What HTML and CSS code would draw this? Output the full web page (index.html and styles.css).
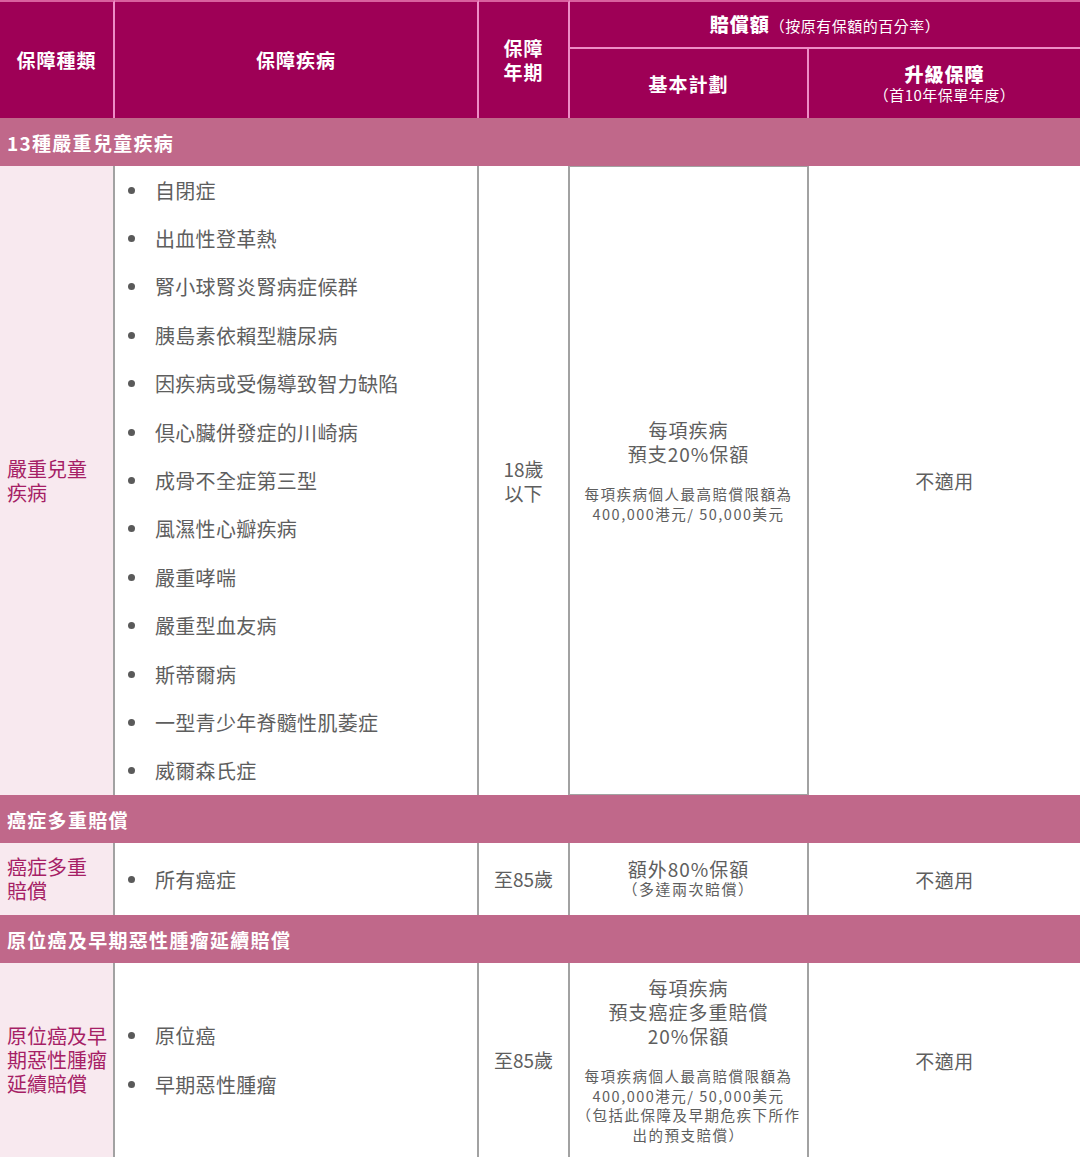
FILE: index.html
```html
<!DOCTYPE html>
<html lang="zh-Hant">
<head>
<meta charset="utf-8">
<title>保障表</title>
<link rel="stylesheet" href="styles.css">
</head>
<body>
<div class="table">
  <div class="h h-type">保障種類</div>
  <div class="h h-disease">保障疾病</div>
  <div class="h h-term">保障<br>年期</div>
  <div class="h h-amount"><span class="amount-line"><b>賠償額</b><span class="note">（按原有保額的百分率）</span></span></div>
  <div class="h h-basic">基本計劃</div>
  <div class="h h-upgrade"><b>升級保障</b><span class="note">（首10年保單年度）</span></div>

  <div class="section">13種嚴重兒童疾病</div>
  <div class="c type">嚴重兒童<br>疾病</div>
  <ul class="c list list-fill">
    <li>自閉症</li>
    <li>出血性登革熱</li>
    <li>腎小球腎炎腎病症候群</li>
    <li>胰島素依賴型糖尿病</li>
    <li>因疾病或受傷導致智力缺陷</li>
    <li>倶心臟併發症的川崎病</li>
    <li>成骨不全症第三型</li>
    <li>風濕性心瓣疾病</li>
    <li>嚴重哮喘</li>
    <li>嚴重型血友病</li>
    <li>斯蒂爾病</li>
    <li>一型青少年脊髓性肌萎症</li>
    <li>威爾森氏症</li>
  </ul>
  <div class="c term">18歲<br>以下</div>
  <div class="c basic boxed raised">
    <div class="main">每項疾病<br>預支20%保額</div>
    <div class="small">每項疾病個人最高賠償限額為<br>400,000港元/ 50,000美元</div>
  </div>
  <div class="c upgrade">不適用</div>

  <div class="section">癌症多重賠償</div>
  <div class="c type">癌症多重<br>賠償</div>
  <ul class="c list">
    <li>所有癌症</li>
  </ul>
  <div class="c term">至85歲</div>
  <div class="c basic">
    <div class="main tight">額外80%保額</div>
    <div class="small tight">（多達兩次賠償）</div>
  </div>
  <div class="c upgrade">不適用</div>

  <div class="section">原位癌及早期惡性腫瘤延續賠償</div>
  <div class="c type">原位癌及早<br>期惡性腫瘤<br>延續賠償</div>
  <ul class="c list">
    <li>原位癌</li>
    <li>早期惡性腫瘤</li>
  </ul>
  <div class="c term">至85歲</div>
  <div class="c basic">
    <div class="main">每項疾病<br>預支癌症多重賠償<br>20%保額</div>
    <div class="small">每項疾病個人最高賠償限額為<br>400,000港元/ 50,000美元<br>（包括此保障及早期危疾下所作<br>出的預支賠償）</div>
  </div>
  <div class="c upgrade">不適用</div>
</div>
</body>
</html>
```

FILE: styles.css
```css
* {
  box-sizing: border-box;
}

html, body {
  margin: 0;
  padding: 0;
  background: #ffffff;
}

body {
  font-family: "Noto Sans CJK TC", "Noto Sans CJK SC", sans-serif;
  color: #5e5e5e;
}

.table {
  width: 1080px;
  display: grid;
  grid-template-columns: 115px 364px 91px 239px 271px;
  grid-template-rows: 49px 69px 48px 629px 48px 72px 48px 194px;
}

/* header */
.h {
  background: #9e0056;
  color: #ffffff;
  font-weight: 700;
  font-size: 19px;
  letter-spacing: 1px;
  line-height: 24px;
  display: flex;
  flex-direction: column;
  align-items: center;
  justify-content: center;
  text-align: center;
  border-top: 2px solid #d9609e;
}

.h-type,
.h-disease,
.h-term {
  grid-row: span 2;
  border-right: 2px solid #ee8cc6;
}

.h-amount {
  grid-column: span 2;
  border-bottom: 2px solid #ee8cc6;
}

.amount-line {
  display: block;
  line-height: 24px;
}

.h-basic,
.h-upgrade {
  border-top: none;
}

.h-basic {
  border-right: 2px solid #ee8cc6;
}

.h-upgrade {
  line-height: 21px;
  padding-top: 1px;
}

.h .note {
  font-weight: 400;
  font-size: 15px;
  letter-spacing: 0.5px;
}

/* section bars */
.section {
  grid-column: 1 / -1;
  background: #c0688a;
  color: #ffffff;
  font-weight: 700;
  font-size: 19px;
  letter-spacing: 1.3px;
  display: flex;
  align-items: center;
  padding-left: 7px;
}

/* body cells */
.c {
  margin: 0;
  display: flex;
  flex-direction: column;
  justify-content: center;
  border-right: 2px solid #a2a2a2;
  font-size: 20px;
}

.type {
  background: #f8e9ef;
  color: #a61f66;
  line-height: 24px;
  padding-left: 7px;
  letter-spacing: 0;
}

.list {
  list-style: none;
  padding: 0;
}

.list li {
  height: 48.5px;
  display: flex;
  align-items: center;
  gap: 20px;
  padding-left: 13px;
  letter-spacing: 0.3px;
}

.list-fill li {
  flex: 1;
  height: auto;
}

.list li::before {
  content: "";
  width: 7px;
  height: 7px;
  border-radius: 50%;
  background: #5a5a5a;
  flex: none;
}

.term {
  align-items: center;
  text-align: center;
  line-height: 24px;
  font-size: 19px;
}

.basic {
  align-items: center;
  text-align: center;
}

.boxed {
  border-top: 1px solid #a2a2a2;
  border-bottom: 1px solid #a2a2a2;
}

.raised {
  padding-bottom: 20px;
}

.basic .main {
  font-size: 19px;
  line-height: 24px;
  letter-spacing: 1px;
}

.basic .small {
  margin-top: 18px;
  font-size: 14.5px;
  line-height: 19.5px;
  letter-spacing: 1.5px;
}

.basic .main.tight {
  line-height: 20px;
}

.basic .small.tight {
  margin-top: 0;
  line-height: 20px;
  font-size: 15px;
}

.upgrade {
  border-right: none;
  align-items: center;
  font-size: 19px;
  letter-spacing: 0.5px;
}
```
